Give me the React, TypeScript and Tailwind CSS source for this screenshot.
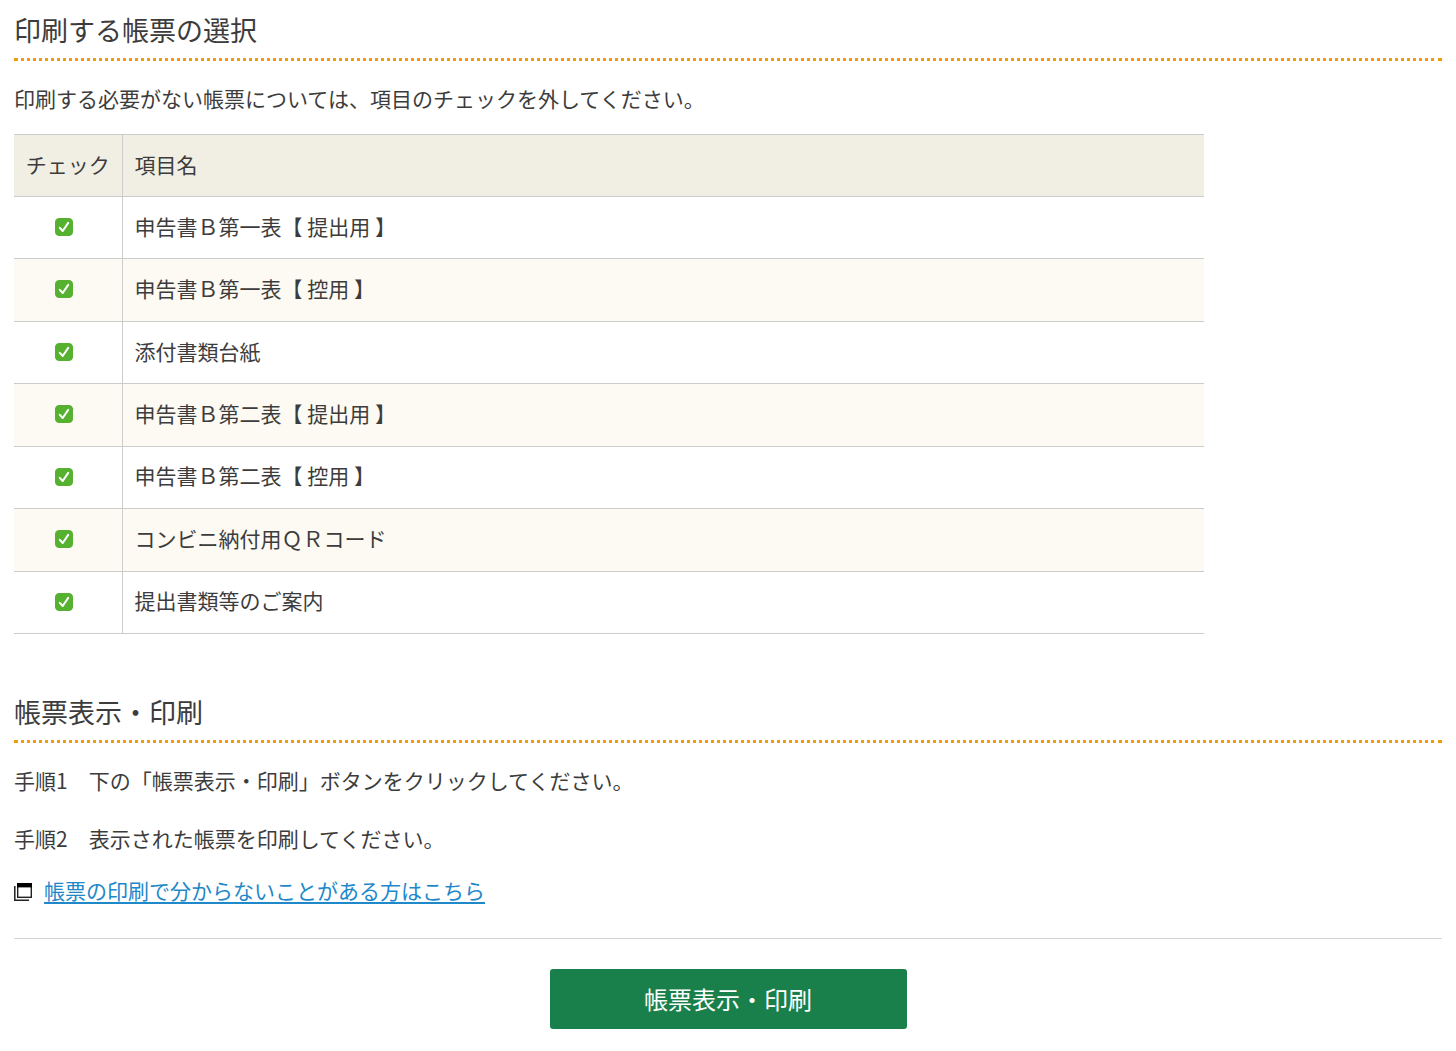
import React, { useState } from 'react';

interface FormItem {
  id: string;
  name: string;
}

const formItems: FormItem[] = [
  { id: 'b1-submit', name: '申告書Ｂ第一表【 提出用 】' },
  { id: 'b1-copy', name: '申告書Ｂ第一表【 控用 】' },
  { id: 'attachment', name: '添付書類台紙' },
  { id: 'b2-submit', name: '申告書Ｂ第二表【 提出用 】' },
  { id: 'b2-copy', name: '申告書Ｂ第二表【 控用 】' },
  { id: 'qr', name: 'コンビニ納付用ＱＲコード' },
  { id: 'guide', name: '提出書類等のご案内' },
];

function SectionHeading({ children }: { children: React.ReactNode }) {
  return (
    <h2 className="border-b-3 border-dotted border-[#f09a0c] pb-2 text-[27px] leading-10 font-normal">
      {children}
    </h2>
  );
}

interface CheckboxProps {
  id: string;
  checked: boolean;
  onChange: () => void;
}

function Checkbox({ id, checked, onChange }: CheckboxProps) {
  return (
    <span className="mr-2 mb-1 inline-grid align-middle">
      <input
        id={id}
        type="checkbox"
        checked={checked}
        onChange={onChange}
        className="col-start-1 row-start-1 size-[18px] cursor-pointer appearance-none rounded border border-[#999] bg-white checked:border-[#55b12f] checked:bg-[#55b12f]"
      />
      {checked && (
        <svg
          viewBox="0 0 18 18"
          className="pointer-events-none col-start-1 row-start-1 size-[18px]"
          fill="none"
          stroke="#fff"
          strokeWidth="2"
          strokeLinecap="round"
          strokeLinejoin="round"
        >
          <path d="M4.8 9.8 L7.7 13 L13.2 4.9" />
        </svg>
      )}
    </span>
  );
}

function WindowIcon() {
  return (
    <svg viewBox="0 0 18 18" className="mt-1 size-[18px] shrink-0" aria-hidden="true">
      <path d="M0.8 3 V17.2 H15" fill="none" stroke="#222" strokeWidth="1.5" />
      <rect x="3.7" y="0.7" width="13.6" height="13.6" fill="#fff" stroke="#222" strokeWidth="1.4" />
      <rect x="3" y="0" width="15" height="4.4" fill="#000" />
    </svg>
  );
}

export default function App() {
  const [selected, setSelected] = useState<string[]>(formItems.map((item) => item.id));

  const toggle = (id: string) => {
    setSelected((prev) => (prev.includes(id) ? prev.filter((x) => x !== id) : [...prev, id]));
  };

  return (
    <main
      lang="ja"
      className="px-3.5 pt-2.5 pb-6 font-['Noto_Sans_CJK_JP',sans-serif] text-[21px] leading-8 text-[#3c3c3c]"
    >
      <section>
        <SectionHeading>印刷する帳票の選択</SectionHeading>
        <p className="mt-[21px]">印刷する必要がない帳票については、項目のチェックを外してください。</p>

        <table className="mt-5 h-[500px] w-5/6 border-collapse text-left">
          <thead>
            <tr className="h-[62px] border-y border-[#ccc] bg-[#f1efe4]">
              <th scope="col" className="w-27 border-r border-[#ccc] pb-1 text-center font-normal whitespace-nowrap">
                チェック
              </th>
              <th scope="col" className="px-3 pb-1 font-normal">項目名</th>
            </tr>
          </thead>
          <tbody>
            {formItems.map((item) => (
              <tr key={item.id} className="border-b border-[#ccc] even:bg-[#fdfaf3]">
                <td className="border-r border-[#ccc] pb-1 text-center">
                  <Checkbox
                    id={item.id}
                    checked={selected.includes(item.id)}
                    onChange={() => toggle(item.id)}
                  />
                </td>
                <td className="px-3 pb-1">
                  <label htmlFor={item.id}>{item.name}</label>
                </td>
              </tr>
            ))}
          </tbody>
        </table>
      </section>

      <section className="mt-[58px]">
        <SectionHeading>帳票表示・印刷</SectionHeading>
        <p className="mt-[21px]">手順1　下の「帳票表示・印刷」ボタンをクリックしてください。</p>
        <p className="mt-[26px]">手順2　表示された帳票を印刷してください。</p>
        <p className="mt-5 flex items-center gap-3">
          <WindowIcon />
          <a href="#help" className="text-[#1e88c9] underline underline-offset-3">
            帳票の印刷で分からないことがある方はこちら
          </a>
        </p>
      </section>

      <div className="mt-8 flex justify-center border-t border-[#d4d4d4] pt-[30px]">
        <button
          type="button"
          className="w-1/4 cursor-pointer rounded-[3px] bg-[#1a804b] py-3 text-2xl leading-9 text-white hover:bg-[#166c3f]"
        >
          帳票表示・印刷
        </button>
      </div>
    </main>
  );
}
